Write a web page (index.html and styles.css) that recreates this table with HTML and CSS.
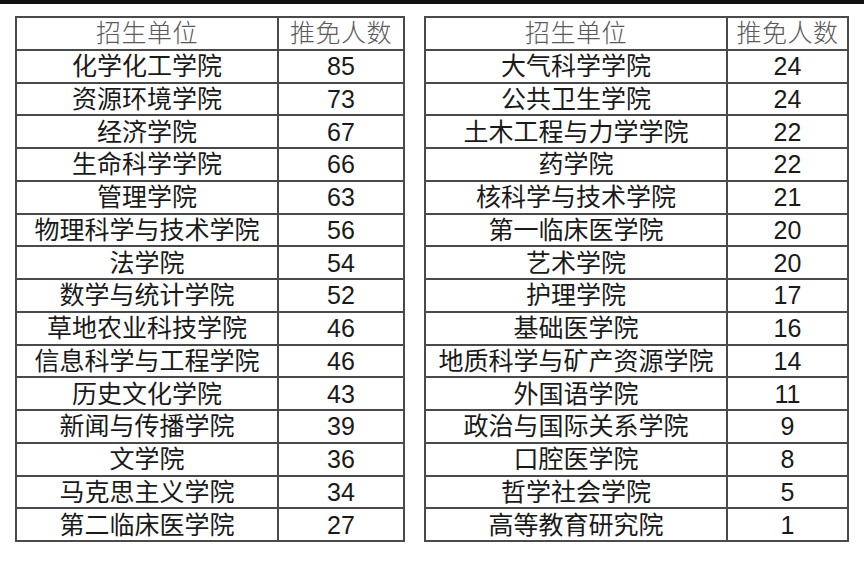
FILE: index.html
```html
<!DOCTYPE html>
<html lang="zh-CN">
<head>
<meta charset="utf-8">
<title>推免人数</title>
<link rel="stylesheet" href="styles.css">
</head>
<body>
<div class="topbar"></div>
<div class="wrap">
  <table class="tbl left">
    <colgroup><col class="c-name-l"><col class="c-num-l"></colgroup>
    <tr class="head"><td>招生单位</td><td>推免人数</td></tr>
    <tr><td>化学化工学院</td><td>85</td></tr>
    <tr><td>资源环境学院</td><td>73</td></tr>
    <tr><td>经济学院</td><td>67</td></tr>
    <tr><td>生命科学学院</td><td>66</td></tr>
    <tr><td>管理学院</td><td>63</td></tr>
    <tr><td>物理科学与技术学院</td><td>56</td></tr>
    <tr><td>法学院</td><td>54</td></tr>
    <tr><td>数学与统计学院</td><td>52</td></tr>
    <tr><td>草地农业科技学院</td><td>46</td></tr>
    <tr><td>信息科学与工程学院</td><td>46</td></tr>
    <tr><td>历史文化学院</td><td>43</td></tr>
    <tr><td>新闻与传播学院</td><td>39</td></tr>
    <tr><td>文学院</td><td>36</td></tr>
    <tr><td>马克思主义学院</td><td>34</td></tr>
    <tr><td>第二临床医学院</td><td>27</td></tr>
  </table>
  <table class="tbl right">
    <colgroup><col class="c-name-r"><col class="c-num-r"></colgroup>
    <tr class="head"><td>招生单位</td><td>推免人数</td></tr>
    <tr><td>大气科学学院</td><td>24</td></tr>
    <tr><td>公共卫生学院</td><td>24</td></tr>
    <tr><td>土木工程与力学学院</td><td>22</td></tr>
    <tr><td>药学院</td><td>22</td></tr>
    <tr><td>核科学与技术学院</td><td>21</td></tr>
    <tr><td>第一临床医学院</td><td>20</td></tr>
    <tr><td>艺术学院</td><td>20</td></tr>
    <tr><td>护理学院</td><td>17</td></tr>
    <tr><td>基础医学院</td><td>16</td></tr>
    <tr><td>地质科学与矿产资源学院</td><td>14</td></tr>
    <tr><td>外国语学院</td><td>11</td></tr>
    <tr><td>政治与国际关系学院</td><td>9</td></tr>
    <tr><td>口腔医学院</td><td>8</td></tr>
    <tr><td>哲学社会学院</td><td>5</td></tr>
    <tr><td>高等教育研究院</td><td>1</td></tr>
  </table>
</div>
</body>
</html>
```
FILE: styles.css
```css
html, body {
  margin: 0;
  padding: 0;
  background: #ffffff;
}
body {
  width: 864px;
  height: 567px;
  overflow: hidden;
  font-family: "Liberation Sans", "Noto Sans CJK SC", sans-serif;
}
.topbar {
  height: 4px;
  background: #111111;
}
.wrap {
  display: flex;
  align-items: flex-start;
  gap: 19px;
  padding: 12px 0 0 15px;
}
.tbl {
  border-collapse: collapse;
  table-layout: fixed;
  height: 526px;
  border: 2px solid #4a4a4a;
}
.left { width: 388px; }
.right { width: 423px; }
.c-name-l { width: 262px; }
.c-num-l { width: 126px; }
.c-name-r { width: 302px; }
.c-num-r { width: 121px; }
.tbl td {
  border: 2px solid #4a4a4a;
  padding: 0;
  text-align: center;
  vertical-align: middle;
  font-size: 25px;
  line-height: 28px;
  font-weight: 400;
  color: #1a1a1a;
  white-space: nowrap;
  overflow: hidden;
}
.tbl .head td {
  color: #5a5a5a;
  font-weight: 300;
  letter-spacing: 0.5px;
}
```
